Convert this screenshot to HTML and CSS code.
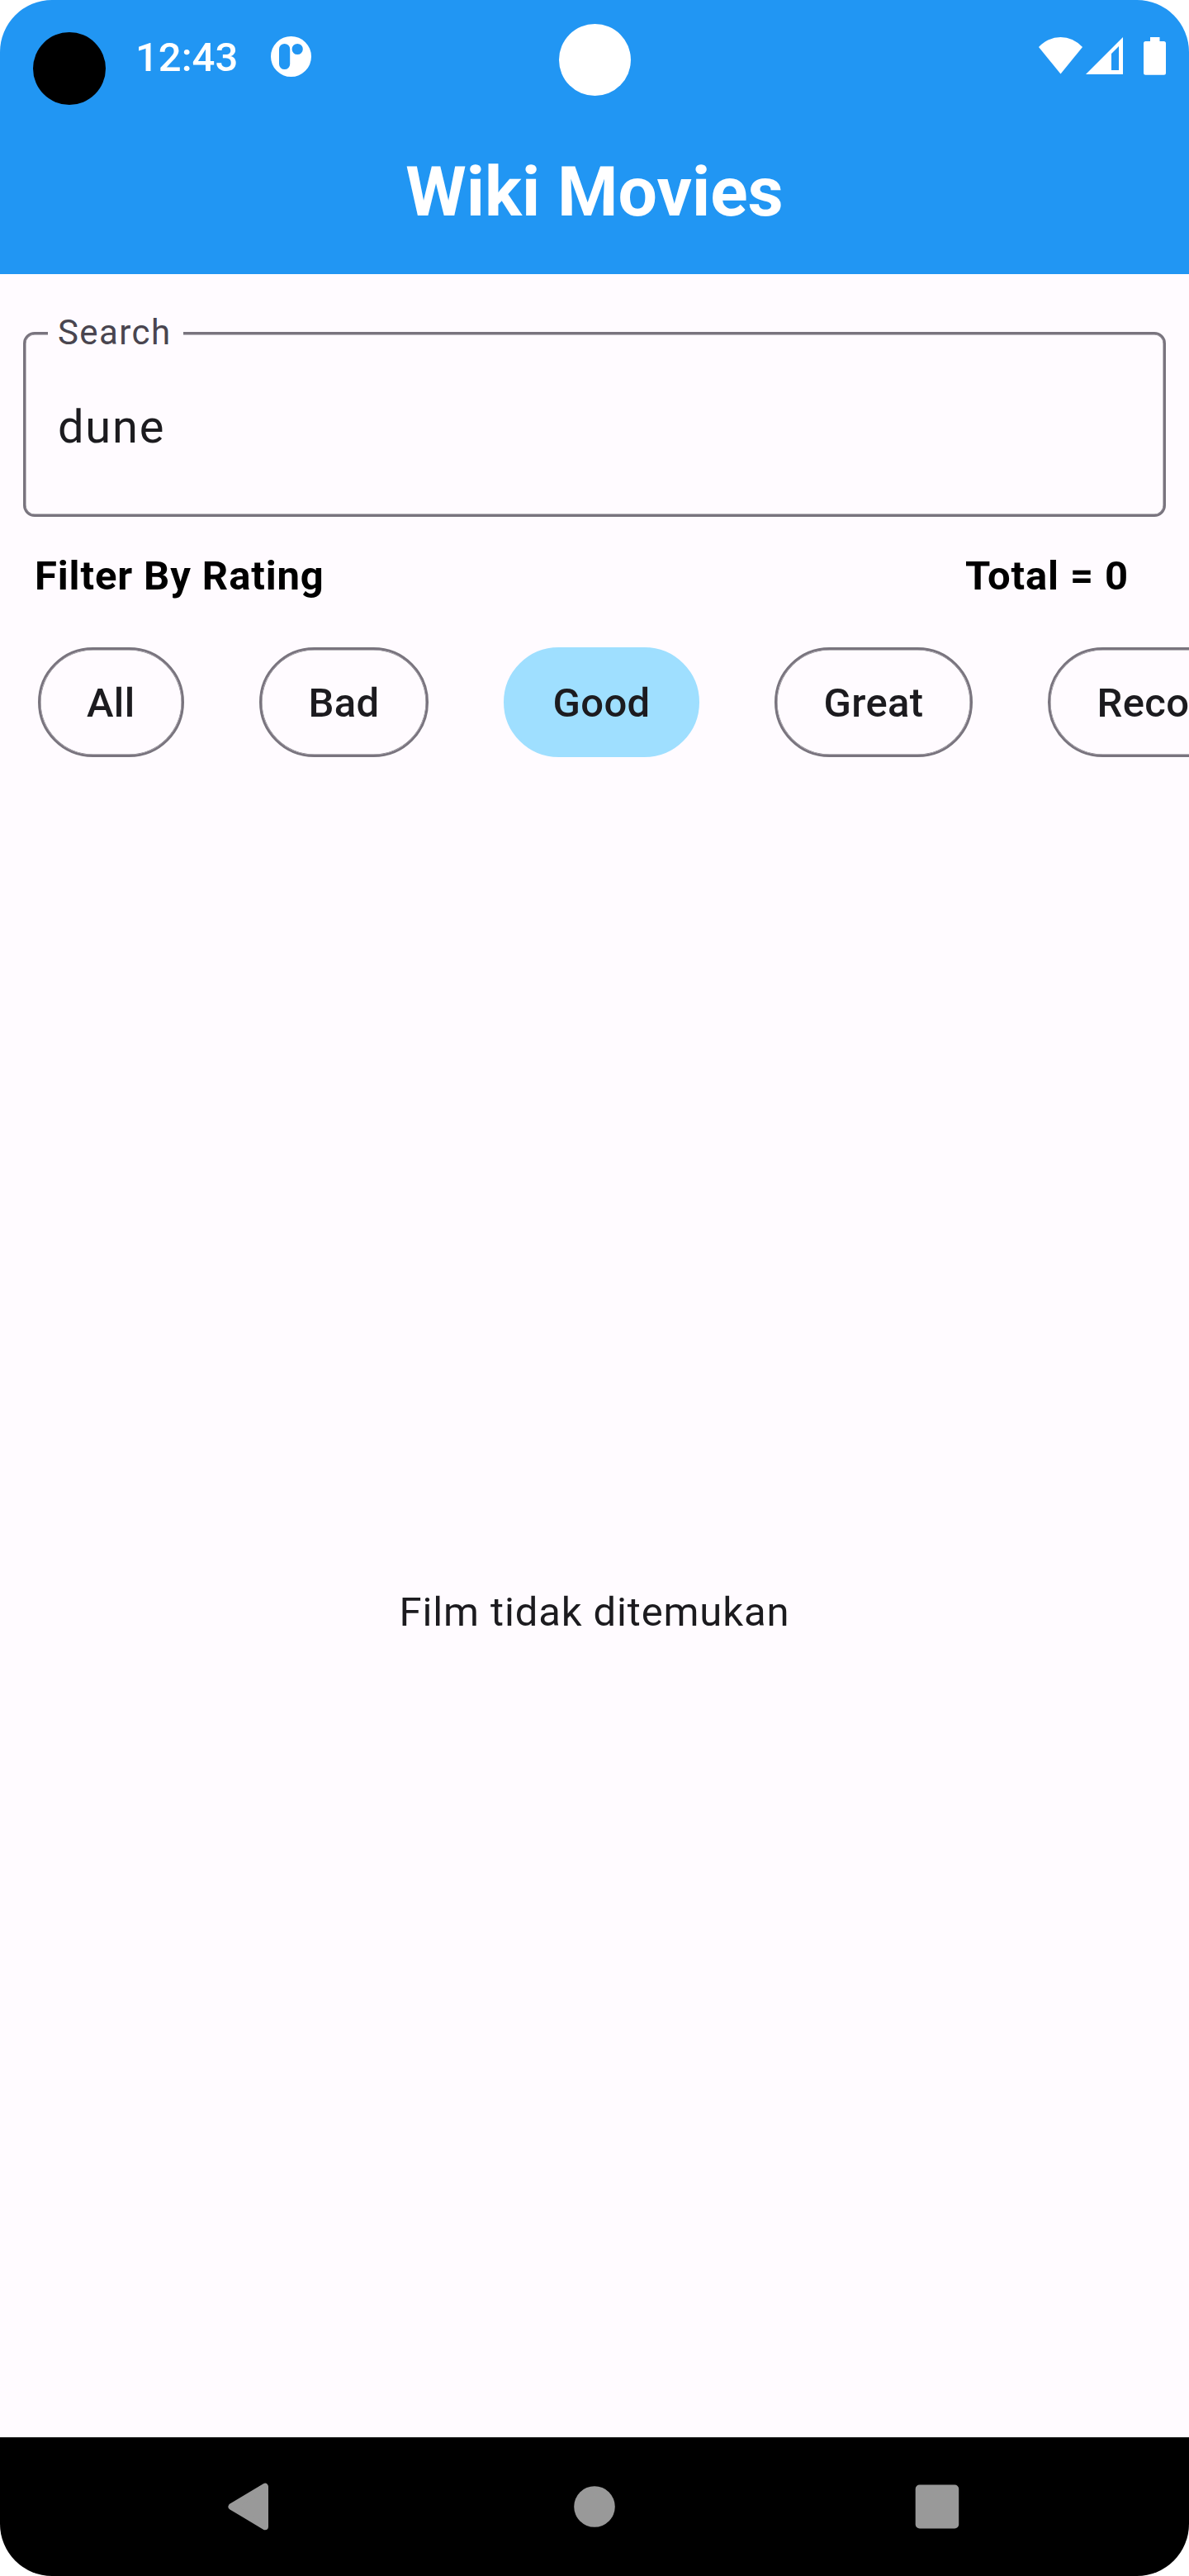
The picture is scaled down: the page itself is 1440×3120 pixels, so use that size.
FILE: index.html
```html
<!DOCTYPE html>
<html lang="id">
<head>
<meta charset="utf-8">
<title>Wiki Movies</title>
<link rel="stylesheet" href="styles.css">
</head>
<body>
<div class="screen">
  <header class="header">
    <div class="status-bar">
      <span class="camera"></span>
      <span class="clock">12:43</span>
      <svg class="app-icon" viewBox="0 0 49 49"><path fill="#fff" fill-rule="evenodd" d="M24.5 0a24.5 24.5 0 1 1 0 49a24.5 24.5 0 1 1 0-49zM10 15.500v18a6.600 6.600 0 0 0 13.200 0v-18a6.600 6.600 0 0 0-13.200 0zM25.600 15.500a6.600 6.600 0 1 0 13.200 0a6.600 6.600 0 1 0-13.200 0z"/></svg>
      <svg class="system-icons" viewBox="0 0 156 48" fill="#fff">
        <path d="M0 13Q11.500 1 26.500 1T53 13L26.500 45.500z"/>
        <path fill-rule="evenodd" d="M57 46L102 1v45zM88 21v20h9V12z"/>
        <path d="M135 1h11.500v5h5q2.500 0 2.500 2.500v35.700q0 2.500-2.500 2.500h-22q-2.500 0-2.500-2.500V8.500q0-2.500 2.500-2.500h5.500z"/>
      </svg>
      <span class="cutout"></span>
    </div>
    <h1 class="title">Wiki Movies</h1>
  </header>
  <main class="content">
    <fieldset class="search">
      <legend class="search-label">Search</legend>
      <div class="search-value">dune</div>
    </fieldset>
    <div class="summary">
      <span>Filter By Rating</span>
      <span>Total = 0</span>
    </div>
    <div class="chips">
      <span class="chip">All</span>
      <span class="chip">Bad</span>
      <span class="chip chip-selected">Good</span>
      <span class="chip">Great</span>
      <span class="chip">Recommended</span>
    </div>
    <p class="empty">Film tidak ditemukan</p>
  </main>
  <nav class="nav-bar">
    <svg class="nav-icon" viewBox="0 0 60 60"><path fill="#999" stroke="#999" stroke-width="8" stroke-linejoin="round" d="M7.500 30L48 5.800V54.200z"/></svg>
    <svg class="nav-icon" viewBox="0 0 60 60"><circle cx="30" cy="30" r="24.800" fill="#999"/></svg>
    <svg class="nav-icon" viewBox="0 0 60 60"><rect x="1.700" y="3.500" width="52.500" height="53" rx="5" fill="#999"/></svg>
  </nav>
</div>
</body>
</html>
```
FILE: styles.css
```css
* {
  box-sizing: border-box;
}

body {
  margin: 0;
  background: #fff;
  font-family: Roboto, "Liberation Sans", sans-serif;
  color: #1c1b1f;
}

.screen {
  display: flex;
  flex-direction: column;
  width: 1440px;
  height: 3120px;
  border-radius: 63px;
  overflow: hidden;
  background: #fffbff;
}

.header {
  height: 332px;
  background: #2196f3;
  color: #fff;
}

.status-bar {
  position: relative;
  display: flex;
  align-items: flex-start;
  height: 145px;
  padding: 39px 26px 0 40px;
}

.camera {
  width: 88px;
  height: 88px;
  border-radius: 50%;
  background: #000;
}

.clock {
  margin: 2px 0 0 36px;
  width: 164px;
  font-size: 49px;
  line-height: 58px;
  font-weight: 500;
}

.app-icon {
  width: 49px;
  height: 49px;
  margin-top: 5px;
}

.system-icons {
  width: 156px;
  height: 48px;
  margin: 5px 0 0 auto;
}

.cutout {
  position: absolute;
  top: 29px;
  left: 677px;
  width: 87px;
  height: 87px;
  border-radius: 50%;
  background: #fff;
}

.title {
  margin: 0;
  padding-top: 39px;
  font-size: 84px;
  line-height: 98px;
  font-weight: 700;
  text-align: center;
}

.content {
  flex: 1;
  display: flex;
  flex-direction: column;
  padding-top: 46px;
}

.search {
  min-width: 0;
  height: 248px;
  margin: 0 28px;
  padding: 0 39px;
  border: 3px solid #79747e;
  border-radius: 14px;
  box-shadow: inset 0 0 0 0.5px #79747e;
}

.search-label {
  height: 50px;
  margin-left: -12px;
  padding: 0 15px 0 12px;
  background: #fffbff;
  color: #49454f;
  font-size: 42px;
  line-height: 50px;
  letter-spacing: 1.4px;
}

.search-value {
  padding-top: 56px;
  font-size: 56px;
  line-height: 66px;
  letter-spacing: 1.75px;
}

.summary {
  display: flex;
  justify-content: space-between;
  margin-top: 43px;
  padding: 0 73px 0 42px;
  color: #000;
  font-size: 49px;
  line-height: 58px;
  font-weight: 700;
  letter-spacing: 0.875px;
}

.chips {
  display: flex;
  gap: 91px;
  margin-top: 57px;
  padding-left: 45.5px;
  overflow: hidden;
}

.chip {
  flex: none;
  height: 133px;
  padding: 36px 56.5px;
  border: 3px solid #79747e;
  border-radius: 66.5px;
  box-shadow: inset 0 0 0 0.5px #79747e;
  font-size: 49px;
  line-height: 58px;
  font-weight: 500;
  letter-spacing: 0.35px;
}

.chip-selected {
  border-color: #9fdfff;
  background: #9fdfff;
  box-shadow: none;
}

.empty {
  flex: 1;
  display: flex;
  align-items: center;
  justify-content: center;
  margin: 0;
  padding-top: 36px;
  font-size: 49px;
  line-height: 58px;
  letter-spacing: 0.875px;
}

.nav-bar {
  display: flex;
  justify-content: space-between;
  align-items: center;
  height: 168px;
  padding: 0 273px;
  background: #000;
}

.nav-icon {
  width: 60px;
  height: 60px;
}
```
